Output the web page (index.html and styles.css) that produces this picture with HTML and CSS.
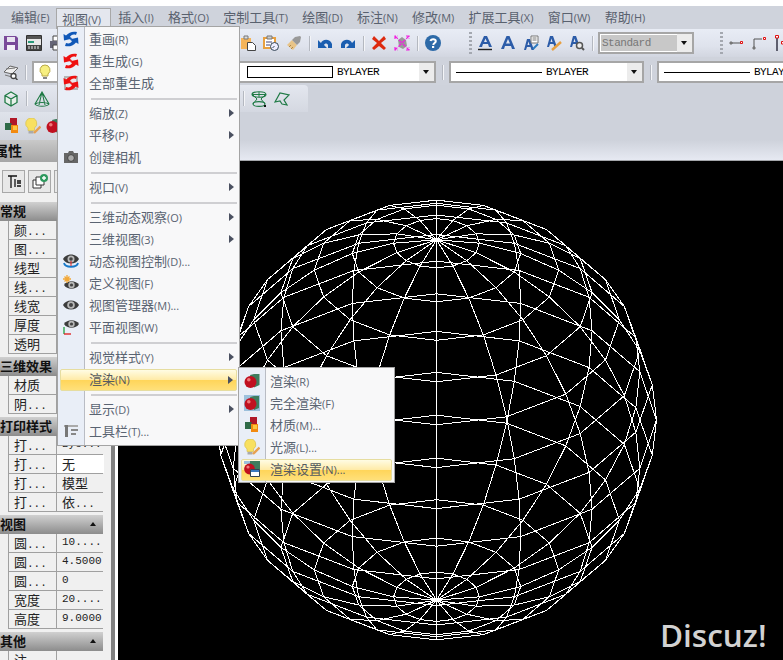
FILE: index.html
```html
<!DOCTYPE html>
<html lang="zh">
<head>
<meta charset="utf-8">
<title>视图</title>
<link rel="stylesheet" href="styles.css">
</head>
<body>
<svg class="defs" aria-hidden="true">
  <symbol id="save" viewBox="0 0 16 16"><path d="M1 1h12l2 2v12H1z" fill="#7a4a9a"/><path d="M4 2h8v5H4z" fill="#e8e4f0"/><path d="M4 10h8v5H4z" fill="#f4f0f8"/></symbol>
  <symbol id="acis" viewBox="0 0 16 16"><path d="M.5 .5h15v15H.5z" fill="#e8e8e8" stroke="#333"/><path d="M1 1h14v3H1z" fill="#555"/><path d="M2 6h6v2H2z" fill="#2a9a7a"/><path d="M1 10h14v5H1z" fill="#444"/><path d="M3 11v3M6 11v3M9 11v3M12 11v3" stroke="#eee"/></symbol>
  <symbol id="print" viewBox="0 0 16 16"><path d="M4 1h8v5H4z" fill="#fff" stroke="#444"/><path d="M1 6h14v7H1z" fill="#667"/><path d="M4 10h8v5H4z" fill="#fff" stroke="#444"/></symbol>
  <symbol id="paste" viewBox="0 0 16 16"><path d="M1 3h10v11H1z" fill="#f4b45a"/><path d="M4 1h4v3H4z" fill="#ddd" stroke="#777"/><path d="M7.500 7.500h5l3 3v5h-8z" fill="#fff" stroke="#444"/></symbol>
  <symbol id="match" viewBox="0 0 16 16"><path d="M1 3h11v10H1z" fill="#fff" stroke="#e8a040" stroke-width="2"/><path d="M4 1h5v3H4z" fill="#ccc" stroke="#777"/><path d="M3 7h6M3 10h4" stroke="#447"/><circle cx="11.500" cy="11.500" r="4" fill="#eef" stroke="#345"/><path d="M11.500 11.500l-2 1" stroke="#345"/></symbol>
  <symbol id="brush" viewBox="0 0 16 16"><path d="M1 10l5-5 5 5-4 5z" fill="#e8c488"/><path d="M6 5l3-3 5-1 1 1-1 5-3 3z" fill="#999"/><path d="M3 12l2-2M5 14l2-2" stroke="#b08848"/></symbol>
  <symbol id="undo" viewBox="0 0 16 16"><path d="M4 8C5 4 13 3 15 9v4h-4v-3C10 8 8 8 7 10l3 3H1V5z" fill="#1b5eb0"/></symbol>
  <symbol id="redo" viewBox="0 0 16 16"><path d="M12 8C11 4 3 3 1 9v4h4v-3C6 8 8 8 9 10l-3 3h9V5z" fill="#1b5eb0"/></symbol>
  <symbol id="cross" viewBox="0 0 16 16"><path d="M3 1l5 5 5-5 2 3-5 4 5 5-2 2-5-4-5 4-2-2 5-5-5-4z" fill="#dd2a10"/></symbol>
  <symbol id="pink" viewBox="0 0 16 16"><path d="M4 5l4-3 4 3 1 6-4 3-4-2z" fill="#999"/><path d="M1 1l14 14M15 1L1 15M1 4V1h3M12 1h3v3M1 12v3h3M12 15h3v-3" fill="none" stroke="#f020e0" stroke-dasharray="4 1.500" stroke-width="1.200"/></symbol>
  <symbol id="help" viewBox="0 0 16 16"><circle cx="8" cy="8" r="8" fill="#2d6aa8"/><path d="M5.500 6C6 3.500 10.500 3.500 10.800 6 11 8 8.500 8 8.200 10" fill="none" stroke="#fff" stroke-width="2"/><path d="M7 11h2.200v2H7z" fill="#fff"/></symbol>
  <symbol id="ta" viewBox="0 0 16 16"><path d="M7 1h3l5 11h-3l-1-3H6l-1 3H2zM7 7h3L8.500 3.500z" fill="#2c5ca8"/><path d="M1 14.500h14" stroke="#222" stroke-width="1.400"/></symbol>
  <symbol id="tb" viewBox="0 0 16 16"><path d="M6.500 1h3L15 14h-3l-1-3H5l-1 3H1zM6 8.500h4L8 4z" fill="#2c5ca8"/></symbol>
  <symbol id="tc" viewBox="0 0 16 16"><path d="M4 4h3l4 11H8.500l-1-3H4l-1 3H1zM4.500 10h2L5.500 6.500z" fill="#2c5ca8"/><path d="M8 1h7v7H8z" fill="#fff" stroke="#777"/><path d="M9.500 3h4M9.500 5h4" stroke="#777"/><path d="M10 14l5-5" stroke="#2c7ac0" stroke-width="2"/></symbol>
  <symbol id="td" viewBox="0 0 16 16"><path d="M4 1h3l4 11H8.500l-1-3H4l-1 3H1zM4.500 7h2L5.500 3.500z" fill="#2c5ca8"/><path d="M6 15l9-8" stroke="#e8a040" stroke-width="2.500"/></symbol>
  <symbol id="te" viewBox="0 0 16 16"><path d="M4 1h3l4 11H8.500l-1-3H4l-1 3H1zM4.500 7h2L5.500 3.500z" fill="#2c5ca8"/><circle cx="10.500" cy="10.500" r="3" fill="#eee" stroke="#555" stroke-width="1.500"/><path d="M13 13l2 2" stroke="#555" stroke-width="2"/></symbol>
  <symbol id="d1" viewBox="0 0 16 16"><path d="M2 7h2v2H2z" fill="#777" stroke="#777"/><path d="M4 8h9" stroke="#555"/><path d="M12.500 6.500h2v2h-2z" fill="#fff" stroke="#e01010"/></symbol>
  <symbol id="d2" viewBox="0 0 16 16"><path d="M2 12h2v2H2z" fill="#777" stroke="#777"/><path d="M3 12V4h8" fill="none" stroke="#555"/><path d="M12.500 2.500h2v2h-2z" fill="#fff" stroke="#e01010"/></symbol>
  <symbol id="d3" viewBox="0 0 16 16"><path d="M3 3v13" stroke="#334" stroke-width="1.500"/><path d="M1.500 .5h3v2.500h-3zM7.500 6.500h3v2.500h-3z" fill="#fff" stroke="#e01010"/></symbol>
  <symbol id="layer" viewBox="0 0 16 16"><path d="M1 8l6-6 8 2-6 6z" fill="#eee" stroke="#666"/><path d="M3 5l9-1M2 11l7 2 3-2" fill="none" stroke="#777"/><circle cx="10.500" cy="12" r="2.500" fill="#fff" stroke="#444" stroke-width="1.300"/><path d="M12.500 14l2 2" stroke="#444" stroke-width="1.500"/></symbol>
  <symbol id="bulb" viewBox="0 0 16 16"><path d="M8 1a5 5 0 0 1 3 9v2H5v-2A5 5 0 0 1 8 1z" fill="#f7ef80" stroke="#b8a848"/><path d="M6 13h4v2H6z" fill="#888"/></symbol>
  <symbol id="sun" viewBox="0 0 16 16"><path d="M8 1v14M1 8h14M3 3l10 10M13 3L3 13" stroke="#e8c800" stroke-width="1.500"/></symbol>
  <symbol id="box" viewBox="0 0 16 16"><path d="M8 1l6 3.500v7L8 15l-6-3.500v-7zM2 4.500L8 8l6-3.500M8 8v7" fill="#e8f0ea" stroke="#1f7a45" stroke-width="1.300"/></symbol>
  <symbol id="cone" viewBox="0 0 16 16"><path d="M8 1L1 13c2 3 12 3 14 0zM8 1l-3 13M8 1l3 13M1 13c3-2 11-2 14 0" fill="none" stroke="#1f7a45" stroke-width="1.100"/></symbol>
  <symbol id="hour" viewBox="0 0 16 16"><ellipse cx="8" cy="3.500" rx="7" ry="2.800" fill="none" stroke="#1f7a45" stroke-width="1.100"/><ellipse cx="8" cy="13" rx="6" ry="2.400" fill="none" stroke="#1f7a45" stroke-width="1.100"/><path d="M2 4l4 4-4 5M14 4l-4 4 4 5M1 3.500h14M8 1v5" fill="none" stroke="#1f7a45"/><path d="M13 14h2v2h-2z" fill="#111"/></symbol>
  <symbol id="flag" viewBox="0 0 16 16"><path d="M1 11L6 2l9 2-5 5 3 5-5-1-2-3zM1 11l5-1" fill="none" stroke="#1f7a45" stroke-width="1.200"/></symbol>
  <symbol id="mat" viewBox="0 0 16 16"><path d="M6 0h7v7H6z" fill="#b01828"/><path d="M1 5h6.500v7H1z" fill="#2e6a48"/><path d="M7 7h7v8H7z" fill="#f28a10"/><path d="M9 8h4v4H9z" fill="#fcc840"/></symbol>
  <symbol id="lamp" viewBox="0 0 16 16"><path d="M6 0a5.500 5.500 0 0 1 3.500 10v2.500H3V10A5.500 5.500 0 0 1 6 0z" fill="#f8e060" stroke="#d8c050" stroke-width=".7"/><path d="M3.500 13h5v2.500h-5z" fill="#aaa"/><path d="M9 15l6.500-6.500" stroke="#e8a050" stroke-width="2.400"/></symbol>
  <symbol id="ren" viewBox="0 0 16 16"><path d="M6 2l4-1h5.500v11L10 14.500z" fill="#3e7c5e"/><circle cx="6.500" cy="9" r="6" fill="#c01020"/><circle cx="4.800" cy="6.800" r="1.800" fill="#f07878"/></symbol>
  <symbol id="renb" viewBox="0 0 16 16"><path d="M0 0h16v16H0z" fill="#9cc0dc"/><path d="M6 2l4-1h5v12l-5 2z" fill="#3e7c5e"/><circle cx="6.500" cy="9" r="6" fill="#c01020"/><circle cx="4.800" cy="6.800" r="1.800" fill="#f07878"/></symbol>
  <symbol id="rens" viewBox="0 0 16 16"><path d="M3 0h13v9H3z" fill="#3e7c5e"/><path d="M0 0h6v3H0z" fill="#9cc0dc"/><circle cx="5.500" cy="8" r="5.400" fill="#c01020"/><circle cx="4" cy="6" r="1.600" fill="#f07878"/><path d="M6.500 8.500h9v7h-9z" fill="#fff" stroke="#345"/><path d="M7 9h8v2H7z" fill="#3a78c0"/></symbol>
  <symbol id="reg" viewBox="0 0 16 16"><path d="M14 1L13 4C10 3 8 4 7 6L9.500 7.500 1 9.500 .5 3 3 4.500C6 1 10 0 14 1z"/><path d="M2 15L3 12C6 13 8 12 9 10L6.500 8.500 15 6.500 15.500 13 13 11.500C10 15 6 16 2 15z"/></symbol>
  <symbol id="regall" viewBox="0 0 16 16"><path d="M1 1h14v14H1z" fill="#b4b4b4"/><path d="M3 3h10v10H3z" fill="#e8e8ec"/><path d="M14 1L13 4C10 3 8 4 7 6L9.500 7.500 1 9.500 .5 3 3 4.500C6 1 10 0 14 1z" fill="#ee1010"/><path d="M2 15L3 12C6 13 8 12 9 10L6.500 8.500 15 6.500 15.500 13 13 11.500C10 15 6 16 2 15z" fill="#ee1010"/></symbol>
  <symbol id="cam" viewBox="0 0 16 16"><path d="M1 4h4l1-2h4l1 2h4v10H1z" fill="#666"/><circle cx="8" cy="9" r="3.400" fill="#aaa" stroke="#444"/></symbol>
  <symbol id="eye" viewBox="0 0 16 16"><path d="M0 8C3 2 13 2 16 8 13 14 3 14 0 8z" fill="#3c3c3c"/><circle cx="8" cy="8" r="3.800" fill="#b8b8b8"/><circle cx="8" cy="8" r="2" fill="#444"/></symbol>
  <symbol id="eyeo" viewBox="0 0 16 16"><path d="M0 6C3 0 13 0 16 6 13 12 3 12 0 6z" fill="#3c3c3c"/><circle cx="8" cy="6" r="3.500" fill="#b8b8b8"/><circle cx="8" cy="6" r="1.800" fill="#444"/><path d="M1 10c1 5 13 5 14 0" fill="none" stroke="#1878c8" stroke-width="1.800"/><path d="M8 8v5" stroke="#e02020"/></symbol>
  <symbol id="eyes" viewBox="0 0 16 16"><path d="M1 10C4 5 13 5 16 10 13 15 4 15 1 10z" fill="#3c3c3c"/><circle cx="8.500" cy="10" r="3.200" fill="#b8b8b8"/><circle cx="8.500" cy="10" r="1.600" fill="#444"/><path d="M4 0v8M0 4h8M1.500 1.500l5 5M6.500 1.500l-5 5" stroke="#f2a838" stroke-width="1.300"/></symbol>
  <symbol id="eyep" viewBox="0 0 16 16"><path d="M1 5C4 0 13 0 16 5 13 10 4 10 1 5z" fill="#3c3c3c"/><circle cx="8.500" cy="5" r="3.200" fill="#b8b8b8"/><circle cx="8.500" cy="5" r="1.600" fill="#444"/><path d="M1 8v7" stroke="#20a040" stroke-width="1.300"/><path d="M1 15h7" stroke="#e01818" stroke-width="1.300"/></symbol>
  <symbol id="tool" viewBox="0 0 16 16"><path d="M1 2h14v2H1z" fill="#aaa"/><path d="M2 2v12h3V2z" fill="#777"/><path d="M8 6h7v2H8zM8 10h5v2H8z" fill="#888"/></symbol>
  <symbol id="tree" viewBox="0 0 16 16"><path d="M2 2h9M5 2v12M9 5v8M11 7h4M11 9h4M11 12h4" fill="none" stroke="#111" stroke-width="1.300"/></symbol>
  <symbol id="addw" viewBox="0 0 16 16"><path d="M1 6h8v8H1z" fill="#fff" stroke="#333"/><path d="M4 3h8v8H4z" fill="#fff" stroke="#333"/><circle cx="12" cy="4" r="4" fill="#2e9a5e"/><path d="M12 2v4M10 4h4" stroke="#fff" stroke-width="1.400"/></symbol>
</svg>

<div class="strip"></div>
<nav class="menubar">
  <span class="mb first">编辑<small>(E)</small></span>
  <span class="mb on">视图<small>(V)</small></span>
  <span class="mb">插入<small>(I)</small></span>
  <span class="mb">格式<small>(O)</small></span>
  <span class="mb">定制工具<small>(T)</small></span>
  <span class="mb">绘图<small>(D)</small></span>
  <span class="mb">标注<small>(N)</small></span>
  <span class="mb">修改<small>(M)</small></span>
  <span class="mb">扩展工具<small>(X)</small></span>
  <span class="mb">窗口<small>(W)</small></span>
  <span class="mb">帮助<small>(H)</small></span>
</nav>

<div class="tb row1">
  <svg class="ic"><use href="#save"/></svg>
  <svg class="ic"><use href="#acis"/></svg>
  <svg class="ic"><use href="#print"/></svg>
  <span class="sp1"></span>
  <svg class="ic"><use href="#paste"/></svg>
  <svg class="ic"><use href="#match"/></svg>
  <svg class="ic"><use href="#brush"/></svg>
  <i class="sep"></i>
  <svg class="ic"><use href="#undo"/></svg>
  <svg class="ic"><use href="#redo"/></svg>
  <i class="sep"></i>
  <svg class="ic"><use href="#cross"/></svg>
  <svg class="ic"><use href="#pink"/></svg>
  <i class="sep"></i>
  <svg class="ic"><use href="#help"/></svg>
  <i class="grip g1"></i>
  <svg class="ic pull"><use href="#ta"/></svg>
  <svg class="ic"><use href="#tb"/></svg>
  <svg class="ic"><use href="#tc"/></svg>
  <svg class="ic"><use href="#td"/></svg>
  <svg class="ic"><use href="#te"/></svg>
  <i class="sep"></i>
  <div class="combo std pull"><span class="stdv">Standard</span><b class="drop"></b></div>
  <i class="grip g2"></i>
  <svg class="ic pull"><use href="#d1"/></svg>
  <svg class="ic"><use href="#d2"/></svg>
  <svg class="ic"><use href="#d3"/></svg>
</div>

<div class="tb row2">
  <svg class="ic"><use href="#layer"/></svg>
  <i class="sep"></i>
  <div class="combo layerc"><svg class="ic"><use href="#bulb"/></svg><svg class="ic"><use href="#sun"/></svg></div>
  <div class="combo colorc"><i class="swatch"></i><span class="bl">BYLAYER</span><b class="drop"></b></div>
  <i class="sep"></i>
  <div class="combo linec"><i class="ln"></i><span class="bl">BYLAYER</span><b class="drop"></b></div>
  <i class="sep"></i>
  <div class="combo linec wide"><i class="ln"></i><span class="bl">BYLAYER</span><b class="drop"></b></div>
</div>

<div class="tb row3">
  <svg class="ic"><use href="#box"/></svg>
  <i class="sep"></i>
  <svg class="ic"><use href="#cone"/></svg>
  <span class="sp2"></span>
  <i class="sep"></i>
  <svg class="ic"><use href="#hour"/></svg>
  <svg class="ic"><use href="#flag"/></svg>
</div>

<div class="tb row4">
  <svg class="ic"><use href="#mat"/></svg>
  <svg class="ic"><use href="#lamp"/></svg>
  <svg class="ic"><use href="#ren"/></svg>
</div>

<main class="main">
  <aside class="side">
    <h2 class="ptitle">属性</h2>
    <div class="pbtns">
      <button class="pb"><svg class="ic"><use href="#tree"/></svg></button>
      <button class="pb"><svg class="ic"><use href="#addw"/></svg></button>
      <button class="pb"></button>
    </div>
    <section class="grp first">
      <h3 class="gh">常规</h3>
      <div class="r"><span>颜<i class="d">...</i></span><span></span></div>
      <div class="r"><span>图<i class="d">...</i></span><span></span></div>
      <div class="r"><span>线型</span><span></span></div>
      <div class="r"><span>线<i class="d">...</i></span><span></span></div>
      <div class="r"><span>线宽</span><span></span></div>
      <div class="r"><span>厚度</span><span></span></div>
      <div class="r"><span>透明</span><span></span></div>
    </section>
    <section class="grp">
      <h3 class="gh">三维效果</h3>
      <div class="r"><span>材质</span><span></span></div>
      <div class="r"><span>阴<i class="d">...</i></span><span></span></div>
    </section>
    <section class="grp">
      <h3 class="gh">打印样式</h3>
      <div class="r"><span>打<i class="d">...</i></span><span class="d">Byc...</span></div>
      <div class="r"><span>打<i class="d">...</i></span><span class="sel">无</span></div>
      <div class="r"><span>打<i class="d">...</i></span><span>模型</span></div>
      <div class="r"><span>打<i class="d">...</i></span><span>依<i class="d">...</i></span></div>
    </section>
    <section class="grp">
      <h3 class="gh">视图<i class="up"></i></h3>
      <div class="r"><span>圆<i class="d">...</i></span><span class="d">10....</span></div>
      <div class="r"><span>圆<i class="d">...</i></span><span class="d">4.5000</span></div>
      <div class="r"><span>圆<i class="d">...</i></span><span class="d">0</span></div>
      <div class="r"><span>宽度</span><span class="d">20....</span></div>
      <div class="r"><span>高度</span><span class="d">9.0000</span></div>
    </section>
    <section class="grp">
      <h3 class="gh">其他<i class="up"></i></h3>
      <div class="r"><span>注<i class="d">...</i></span><span class="d">...</span></div>
    </section>
  </aside>
  <div class="work">
    <div class="fade"></div>
    <div class="canvas">
      <svg id="sphere" class="wire" viewBox="118 161 665 499" preserveAspectRatio="xMinYMin"></svg>
      <span class="mark">Discuz!</span>
    </div>
  </div>
</main>

<div class="menu view">
  <div class="it"><svg class="mi blue"><use href="#reg"/></svg><span>重画<small>(R)</small></span></div>
  <div class="it"><svg class="mi red"><use href="#reg"/></svg><span>重生成<small>(G)</small></span></div>
  <div class="it"><svg class="mi"><use href="#regall"/></svg><span>全部重生成</span></div>
  <hr>
  <div class="it more"><span class="mi"></span><span>缩放<small>(Z)</small></span></div>
  <div class="it more"><span class="mi"></span><span>平移<small>(P)</small></span></div>
  <div class="it"><svg class="mi"><use href="#cam"/></svg><span>创建相机</span></div>
  <hr>
  <div class="it more"><span class="mi"></span><span>视口<small>(V)</small></span></div>
  <hr>
  <div class="it more"><span class="mi"></span><span>三维动态观察<small>(O)</small></span></div>
  <div class="it more"><span class="mi"></span><span>三维视图<small>(3)</small></span></div>
  <div class="it"><svg class="mi"><use href="#eyeo"/></svg><span>动态视图控制<small>(D)...</small></span></div>
  <div class="it"><svg class="mi"><use href="#eyes"/></svg><span>定义视图<small>(F)</small></span></div>
  <div class="it"><svg class="mi"><use href="#eye"/></svg><span>视图管理器<small>(M)...</small></span></div>
  <div class="it"><svg class="mi"><use href="#eyep"/></svg><span>平面视图<small>(W)</small></span></div>
  <hr>
  <div class="it more"><span class="mi"></span><span>视觉样式<small>(Y)</small></span></div>
  <div class="it more hot"><span class="mi"></span><span>渲染<small>(N)</small></span></div>
  <hr>
  <div class="it more"><span class="mi"></span><span>显示<small>(D)</small></span></div>
  <div class="it"><svg class="mi"><use href="#tool"/></svg><span>工具栏<small>(T)...</small></span></div>
</div>

<div class="menu subm">
  <div class="it"><svg class="mi"><use href="#ren"/></svg><span>渲染<small>(R)</small></span></div>
  <div class="it"><svg class="mi"><use href="#renb"/></svg><span>完全渲染<small>(F)</small></span></div>
  <div class="it"><svg class="mi"><use href="#mat"/></svg><span>材质<small>(M)...</small></span></div>
  <div class="it"><svg class="mi"><use href="#lamp"/></svg><span>光源<small>(L)...</small></span></div>
  <div class="it hot"><svg class="mi"><use href="#rens"/></svg><span>渲染设置<small>(N)...</small></span></div>
</div>
<script src="sphere.js"></script>
</body>
</html>
```

FILE: styles.css
```css
* { box-sizing: border-box; }
html, body { margin: 0; padding: 0; }
body {
  position: relative;
  width: 783px;
  height: 660px;
  overflow: hidden;
  background: #ced2db;
  font-family: "Noto Sans CJK SC", "Liberation Sans", sans-serif;
  font-size: 13px;
  display: flex;
  flex-direction: column;
}
.defs { position: absolute; width: 0; height: 0; }
small { font-size: 11px; font-family: "Open Sans", "Liberation Sans", sans-serif; }

.strip { height: 6px; background: #fff; flex: none; }

.menubar {
  flex: none;
  height: 23px;
  padding-left: 4px;
  display: flex;
  align-items: center;
  gap: .25px;
  color: #59616e;
  background: #cfd3dc;
}
.mb { padding: 0 7px; line-height: 20px; white-space: nowrap; }
.mb.on {
  height: 22px;
  margin-top: 2px;
  margin-left: -1px;
  padding: 0 9px 0 5px;
  border: 1px solid #a8a8a8;
  border-bottom: 0;
  background: #e4e7ee;
}

.tb { flex: none; display: flex; align-items: center; overflow: hidden; white-space: nowrap; }
.ic { width: 16px; height: 16px; flex: none; }
.sep { width: 1px; height: 15px; background: #b4b8c0; box-shadow: 1px 0 #f4f5f8; flex: none; }
.pull { margin-left: -2px; }
.grip {
  width: 3px;
  height: 22px;
  flex: none;
  background: repeating-linear-gradient(to bottom, #a4a8b0 0 2px, transparent 2px 4px);
}
.row1 {
  height: 28px;
  padding-left: 3px;
  gap: 7px;
  background: linear-gradient(#e8ecf5, #dfe3ed 60%, #d2d6e0);
}
.sp1 { width: 161px; flex: none; }
.g1 { margin-left: 21px; }
.g2 { margin-left: 19px; }
.combo {
  height: 22px;
  flex: none;
  display: flex;
  align-items: center;
  background: #fff;
  border: 2px solid #a6a6a6;
  position: relative;
}
.drop {
  position: absolute;
  right: 0;
  top: 0;
  bottom: 0;
  width: 15px;
  background: #ececec;
}
.drop::after {
  content: "";
  position: absolute;
  left: 4px;
  top: 7px;
  border: 3.500px solid transparent;
  border-top: 4px solid #111;
  border-bottom: 0;
}
.std { width: 96px; padding-left: 1px; }
.stdv, .bl { font-family: "Liberation Mono", monospace; font-size: 11px; letter-spacing: -.5px; }
.stdv { width: 77px; height: 16px; line-height: 16px; background: #c8c8c8; color: #777; padding-left: 1px; }
.bl { color: #000; letter-spacing: -.6px; }

.row2 { height: 28px; padding-left: 3px; gap: 6px; padding-top: 4px; padding-bottom: 2px; background: #cfd3dc; }
.layerc { width: 198px; padding-left: 3px; gap: 4px; }
.colorc { width: 200px; padding-left: 9px; }
.swatch { width: 86px; height: 12px; border: 1px solid #000; margin-right: 4px; flex: none; }
.linec { width: 195px; padding-left: 5px; }
.linec.wide { width: 200px; }
.ln { width: 86px; height: 1px; background: #000; margin-right: 4px; flex: none; }

.row3 {
  height: 27px;
  width: 308px;
  padding-left: 3px;
  gap: 7px;
  border-radius: 0 4px 0 0;
  background: linear-gradient(#e4e7ef, #d4d8e1);
}
.sp2 { width: 179px; flex: none; }
.row4 {
  height: 28px;
  width: 90px;
  padding-left: 4px;
  gap: 5px;
  background: linear-gradient(#dfe3eb, #d0d4dd);
}

.main { flex: 1; display: flex; min-height: 0; }
.side {
  width: 118px;
  flex: none;
  background: #f0f0f0;
  border-right: 3px solid #fff;
  overflow: hidden;
  box-shadow: inset -4px 0 #808080;
}
.ptitle {
  margin: 0;
  height: 22px;
  text-indent: -6px;
  line-height: 20px;
  font-size: 14px;
  font-weight: bold;
  color: #111;
  background: linear-gradient(#c9c9c9, #a6a6a6);
}
.pbtns { height: 40px; padding: 8px 0 0 2px; display: flex; gap: 3px; }
.pb {
  width: 23px;
  height: 23px;
  padding: 0;
  border: 1px solid #a8a8a8;
  background: #e8e8e8;
  display: flex;
  align-items: center;
  justify-content: center;
}
.grp { width: 103px; margin-top: 3px; }
.grp.first { margin-top: 0; }
.gh {
  position: relative;
  margin: 0;
  height: 19px;
  line-height: 17px;
  font-size: 13px;
  font-weight: bold;
  color: #111;
  background: linear-gradient(#d0d0d0, #8c8c8c);
}
.up {
  position: absolute;
  left: 90px;
  top: 7px;
  border: 3.500px solid transparent;
  border-bottom: 4px solid #111;
  border-top: 0;
}
.r {
  height: 19px;
  margin-left: 8px;
  display: grid;
  grid-template-columns: 47px 48px;
  border-bottom: 1px solid #a0a0a0;
  border-left: 1px solid #a0a0a0;
  color: #222;
  line-height: 17px;
}
.r > span { padding-left: 5px; overflow: hidden; white-space: nowrap; }
.r > span + span { border-left: 1px solid #a0a0a0; }
.sel { background: #fff; }
.d { font-family: "Liberation Mono", monospace; font-size: 11px; font-style: normal; }

.work { flex: 1; display: flex; flex-direction: column; min-width: 0; }
.fade { height: 21px; flex: none; border-bottom: 1px solid #a4a6aa; background: linear-gradient(#ced2db, #e6e9f2); }
.canvas { flex: 1; position: relative; background: #000; overflow: hidden; }
.wire { display: block; width: 665px; height: 499px; }
.mark {
  position: absolute;
  left: 542px;
  top: 454px;
  font-family: "Open Sans", sans-serif;
  font-weight: 600;
  font-size: 31.500px;
  line-height: 40px;
  color: #d2d2d2;
}

.menu {
  position: absolute;
  background: linear-gradient(to right, #e9eef7 26px, #b9bcc4 26px, #b9bcc4 27px, #f8f8f9 27px);
  border: 1px solid #a4a4a4;
  padding: 2px;
  color: #5a6472;
}
.view { left: 57px; top: 26px; width: 183px; height: 420px; }
.subm { left: 238px; top: 367px; width: 157px; height: 116px; padding-top: 3px; }
.it {
  position: relative;
  height: 22px;
  display: flex;
  align-items: center;
  white-space: nowrap;
  line-height: 19px;
  padding-bottom: 3px;
}
.mi { width: 16px; height: 16px; margin: 0 10px 0 3px; flex: none; }
.blue { fill: #1058b8; }
.red { fill: #ee1010; }
.it.more::after {
  content: "";
  position: absolute;
  right: 3px;
  top: 6px;
  border: 4.500px solid transparent;
  border-left: 5px solid #4a5060;
  border-right: 0;
}
.hot {
  border: 1px solid #e6dda0;
  border-radius: 2px;
  background: linear-gradient(#fffce4, #ffeba8 48%, #ffd55a 52%, #ffe07a);
  color: #555a60;
}
.hot .mi { margin-left: 2px; }
hr {
  height: 2px;
  border: 0;
  margin: 3px 0 3px 31px;
  background: #cfcfd2;
}
```

FILE: sphere.js
```js
(function () {
  var svg = document.getElementById('sphere');
  var cx = 436.5, cy = 420, R = 220;
  var a = 35 * Math.PI / 180;
  var step = Math.PI / 16, lonStep = Math.PI / 8;
  function pt(phi, lon) {
    var sp = Math.sin(phi), cp = Math.cos(phi);
    var X = sp * Math.sin(lon);
    var Y = cp * Math.cos(a) - sp * Math.cos(lon) * Math.sin(a);
    return (cx + R * X).toFixed(1) + ' ' + (cy - R * Y).toFixed(1);
  }
  var d = '';
  var i, j;
  for (i = 0; i < 16; i++) {
    var lon = i * lonStep;
    d += 'M' + pt(0, lon);
    for (j = 1; j <= 16; j++) d += 'L' + pt(j * step, lon);
  }
  for (j = 1; j < 16; j++) {
    d += 'M' + pt(j * step, 0);
    for (i = 1; i <= 16; i++) d += 'L' + pt(j * step, i * lonStep);
  }
  var p = document.createElementNS('http://www.w3.org/2000/svg', 'path');
  p.setAttribute('d', d);
  p.setAttribute('fill', 'none');
  p.setAttribute('stroke', '#fff');
  p.setAttribute('stroke-width', '1');
  p.setAttribute('shape-rendering', 'crispEdges');
  svg.appendChild(p);
})();
```
